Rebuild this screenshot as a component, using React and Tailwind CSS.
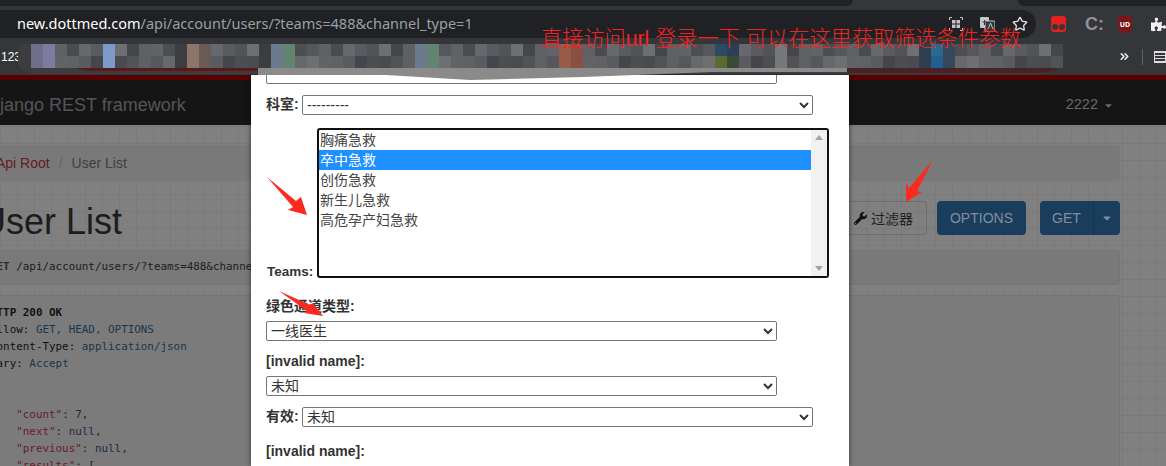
import { ChevronsRight, Star } from "lucide-react";
import { FaCaretDown, FaPuzzlePiece, FaWrench } from "react-icons/fa";

const TEAMS = ["胸痛急救", "卒中急救", "创伤急救", "新生儿急救", "高危孕产妇急救"];

const GRAYS = ["#4d4e52", "#56575c", "#606165", "#4a4b50", "#67686b", "#5a5b60", "#525357", "#6e6f72", "#45464b", "#5e6064", "#626366"];
const SPECIAL = {
  0: ["#6f6f8a", "#6f6f8a"],
  1: ["#7c7c9e", "#7c7c9e"],
  6: ["#7b9cc9", "#7b9cc9"],
  12: ["#3c3d41", "#3c3d41"],
  13: ["#8c766c", "#8c766c"],
  14: ["#695a56", "#695a56"],
  19: ["#3c3d41", "#3c3d41"],
  20: ["#6b7a8c", "#6b7a8c"],
  21: ["#62856f", "#62856f"],
  32: ["#6b7a8c", "#6b7a8c"],
  33: ["#62856f", "#62856f"],
  44: ["#9a5a48", "#9a5a48"],
  45: ["#884f42", "#884f42"],
  57: ["#2a4a66", "#5a6a30"],
  58: ["#2c3e55", "#3a4a38"],
  62: ["#76787a", "#76787a"],
  74: ["#2f3e4d", "#2f3e4d"],
  75: ["#2a6a8a", "#205f90"],
  76: ["#35475a", "#35475a"],
};

const CODE = [
  [["#111", "HTTP 200 OK", "font-bold"]],
  [["#111", "Allow: "], ["#17364d", "GET, HEAD, OPTIONS"]],
  [["#111", "Content-Type: "], ["#17364d", "application/json"]],
  [["#111", "Vary: "], ["#17364d", "Accept"]],
  [],
  [["#111", "{"]],
  [["#6a1a2a", '    "count"'], ["#222", ": "], ["#1a2a44", "7"], ["#222", ","]],
  [["#6a1a2a", '    "next"'], ["#222", ": "], ["#1a2a44", "null"], ["#222", ","]],
  [["#6a1a2a", '    "previous"'], ["#222", ": "], ["#1a2a44", "null"], ["#222", ","]],
  [["#6a1a2a", '    "results"'], ["#222", ": ["]],
];

function Mosaic() {
  const cols = Array.from({ length: 86 }, (_, i) => i);
  return (
    <svg className="absolute left-0 top-[38px]" width="1166" height="44" viewBox="0 38 1166 44">
      <path d="M24 44 Q18 44 18 52 L18 64 Q20 72 34 74 L1040 74 Q1060 72 1060 64 L1060 52 Q1060 44 1050 44 Z" fill="#3c3d41" />
      {cols.map((i) => {
        const c = SPECIAL[i] || [GRAYS[i % GRAYS.length], GRAYS[(i * 3 + 4) % GRAYS.length]];
        return (
          <g key={i}>
            <rect x={31 + i * 12} y="44" width="12" height="12" fill={c[0]} />
            <rect x={31 + i * 12} y="56" width="12" height="12" fill={c[1]} />
          </g>
        );
      })}
      <path d="M74 68 L258 68 L258 71 L90 71 Z" fill="#5a1a1a" />
      <path d="M847 68 L1058 68 Q1056 72 1040 73 L847 73 Z" fill="#4a2226" />
      <path d="M258 68 L847 68 L847 72 L713 72 L583 77 L470 80 L386 75 L258 75 Z" fill="#8a8a8a" />
    </svg>
  );
}

function BrowserChrome() {
  return (
    <div className="h-[75px] bg-[#35363a] font-['Noto_Sans',sans-serif]">
      <div className="flex h-[6px] bg-[#35363a]">
        <div className="w-[853px] rounded-br-lg bg-[#202124]" />
        <div className="flex-1" />
        <div className="w-[148px] rounded-bl-lg bg-[#202124]" />
      </div>
      <div className="flex h-[32px] items-center pt-[4px]">
        <div className="flex h-[28px] w-[1036px] items-center rounded-r-[14px] bg-[#202124] pl-[17px] text-[14.5px]">
          <span className="text-white">new.dottmed.com</span>
          <span className="text-[#9aa0a6]">/api/account/users/?teams=488&amp;channel_type=1</span>
          <div className="ml-auto mr-[8px] flex items-center gap-[17px]">
            <svg width="14" height="14" viewBox="0 0 14 14" fill="none" stroke="#c4c7c5">
              <path d="M.5 3V.5H3M11 .5h2.500V3M13.500 11v2.500H11M3 13.500H.5V11" />
              <rect x="3" y="3" width="3.500" height="3.500" fill="#c4c7c5" stroke="none" />
              <rect x="7.500" y="3" width="3.500" height="3.500" fill="#c4c7c5" stroke="none" />
              <rect x="3" y="7.500" width="3.500" height="3.500" fill="#c4c7c5" stroke="none" />
              <rect x="7.500" y="7.500" width="3.500" height="3.500" fill="#c4c7c5" stroke="none" />
            </svg>
            <svg width="15" height="15" viewBox="0 0 15 15">
              <rect x="0" y="0" width="9" height="11" rx="1" fill="#c4c7c5" />
              <rect x="5" y="4" width="10" height="11" rx="1" fill="#35363a" stroke="#c4c7c5" />
              <path d="M2.500 5h4M4.500 3v5" stroke="#35363a" />
              <path d="M8 12l2.500-6 2.500 6" stroke="#c4c7c5" fill="none" />
            </svg>
            <Star size={16} color="#e3e3e3" strokeWidth={2} />
          </div>
        </div>
        <div className="ml-[15px] flex items-center gap-[19px]">
          <div className="flex h-[16px] w-[15px] items-end justify-center gap-px rounded-[3px] bg-[#e3231b] pb-[2px]">
            <span className="h-[6px] w-[6px] rounded-full bg-[#35363a]" />
            <span className="h-[6px] w-[6px] rounded-full bg-[#35363a]" />
          </div>
          <span className="w-[14px] font-['Liberation_Sans',sans-serif] text-[18px] font-bold leading-none text-[#8f9194]">C:</span>
          <div className="flex h-[17px] w-[14px] items-center justify-center rounded-b-[6px] rounded-t-[2px] bg-[#7b1618] text-[7px] font-bold leading-none text-white">
            UD
          </div>
          <FaPuzzlePiece size={15} color="#f1f1f1" />
        </div>
      </div>
      <div className="relative flex h-[37px] items-center">
        <span className="pl-[1px] font-['Liberation_Sans',sans-serif] text-[12px] text-white">123</span>
        <div className="ml-auto flex items-center">
          <ChevronsRight size={13} color="#eee" strokeWidth={3} />
          <span className="ml-[11px] h-[16px] w-px bg-[#5f6063]" />
          <div className="ml-[11px] h-[12px] w-[12px] border border-[#ddd] bg-[linear-gradient(#ddd_1px,transparent_1px)] bg-[size:4px_3px]" />
        </div>
      </div>
    </div>
  );
}

function DimmedPage() {
  return (
    <div className="h-[391px] overflow-hidden bg-[#808080] bg-[linear-gradient(#7a7a7a_1px,transparent_1px),linear-gradient(90deg,#7a7a7a_1px,transparent_1px)] bg-[size:17px_17px] font-['Liberation_Sans',sans-serif]">
      <div className="h-[5px] bg-[#590000]" />
      <div className="flex h-[45px] items-center bg-[#151515] pt-[5px] text-[#555]">
        <span className="-ml-[13px] text-[18px]">Django REST framework</span>
        <span className="ml-auto mr-[52px] flex items-center gap-[5px] text-[14.5px] text-[#6a6a6a]">
          2222
          <FaCaretDown size={11} />
        </span>
      </div>
      <div className="-ml-[20px] w-[1140px] pt-[20px]">
        <div className="flex h-[36px] items-center rounded bg-[#797979] pl-[16px] text-[14px]">
          <span className="text-[#661a1a]">Api Root</span>
          <span className="px-[9px] text-[#666]">/</span>
          <span className="text-[#404040]">User List</span>
        </div>
        <div className="mt-[20px] flex h-[34px] items-center justify-between">
          <h1 className="pt-[8px] text-[36px] leading-none text-[#1c1c1c]">User List</h1>
          <div className="flex h-[34px] text-[14px]">
            <div className="flex w-[100px] items-center gap-[4px] rounded border border-[#6d6d6d] pl-[26px] text-[#1f1f1f]">
              <FaWrench size={13} color="#111" />
              <span className="font-['Noto_Sans_CJK_SC',sans-serif]">过滤器</span>
            </div>
            <div className="ml-[10px] flex w-[89px] items-center justify-center rounded bg-[#1b3d5c] text-[#7f8f9f]">OPTIONS</div>
            <div className="ml-[14px] flex w-[80px] items-center rounded bg-[#1b3d5c] text-[#7f8f9f]">
              <span className="flex h-full w-[54px] items-center justify-center border-r border-[#173550]">GET</span>
              <FaCaretDown size={12} className="ml-[7px]" />
            </div>
          </div>
        </div>
        <div className="mt-[15px] flex h-[35px] items-center rounded border border-[#747474] bg-[#797979] pl-[9px] font-['DejaVu_Sans_Mono',monospace] text-[10.9px]">
          <span className="font-bold text-[#2a2a2a]">GET</span>
          <span className="whitespace-pre text-[#1c1c1c]"> /api/account/users/?teams=488&amp;channel_type=1</span>
        </div>
        <div className="mt-[10px] h-[300px] rounded border border-[#747474] bg-[#7b7b7b] pl-[9px] pt-[8px] font-['DejaVu_Sans_Mono',monospace] text-[10.9px] leading-[17px]">
          {CODE.map((line, i) => (
            <div key={i} className="h-[17px] whitespace-pre">
              {line.map(([color, text, cls]) => (
                <span key={text} className={cls} style={{ color }}>
                  {text}
                </span>
              ))}
            </div>
          ))}
        </div>
      </div>
    </div>
  );
}

function Field({ value, className }) {
  return (
    <select
      defaultValue={value}
      className={`h-[20px] rounded-[2px] border border-[#767676] bg-white font-['Liberation_Sans','Noto_Sans_CJK_SC',sans-serif] text-[14px] leading-none font-normal text-[#333] ${className}`}
    >
      <option>{value}</option>
    </select>
  );
}

function Modal() {
  return (
    <div className="absolute bottom-0 left-[251px] top-[75px] w-[598px] overflow-hidden bg-white pl-[15px] font-['Liberation_Sans','Noto_Sans_CJK_SC',sans-serif] text-[14px] font-bold text-[#333] shadow-[0_0_5px_rgba(0,0,0,0.6)]">
      <div className="-mt-[11px] h-[20px] w-[511px] rounded-[2px] border border-[#767676]" />
      <div className="mt-[10px] flex items-center">
        <span className="w-[36px]">科室:</span>
        <Field value="---------" className="w-[511px]" />
      </div>
      <div className="mt-[13px] flex items-end">
        <span className="mb-[-4px] w-[51px] pl-[1px] text-[13.5px]">Teams:</span>
        <div className="flex h-[150px] w-[512px] rounded-[3px] border-2 border-[#101010] bg-white text-[14px] leading-[20px] font-normal text-[#444]">
          <div className="flex-1">
            {TEAMS.map((t, i) => (
              <div key={t} className={i === 1 ? "h-[20px] bg-[#1e90ff] pl-[1px] text-white" : "h-[20px] pl-[1px]"}>
                {t}
              </div>
            ))}
          </div>
          <div className="flex w-[16px] flex-col items-center justify-between bg-[#f1f1f1] py-[5px]">
            <span className="h-0 w-0 border-x-[4px] border-b-[5px] border-x-transparent border-b-[#a3a3a3]" />
            <span className="h-0 w-0 border-x-[4px] border-t-[5px] border-x-transparent border-t-[#a3a3a3]" />
          </div>
        </div>
      </div>
      <div className="mt-[18px] leading-[20px]">绿色通道类型:</div>
      <Field value="一线医生" className="mt-[5px] block w-[511px]" />
      <div className="mt-[10px] leading-[20px]">[invalid name]:</div>
      <Field value="未知" className="mt-[5px] block w-[511px]" />
      <div className="mt-[10px] flex items-center">
        <span className="w-[36px]">有效:</span>
        <Field value="未知" className="w-[511px]" />
      </div>
      <div className="mt-[14px] leading-[20px]">[invalid name]:</div>
    </div>
  );
}

function Annotations() {
  return (
    <>
      <span className="absolute left-[541px] top-[24px] whitespace-pre font-['Liberation_Sans','Noto_Sans_CJK_SC',sans-serif] text-[21.2px] font-light leading-[30px] text-[#f5231f]">
        直接访问url 登录一下 可以在这里获取筛选条件参数
      </span>
      <svg className="pointer-events-none absolute left-0 top-0" width="1166" height="466" fill="#fb2a1e">
        <polygon points="267,177 296,201 301,197 307,215 288,210 293,207" />
        <polygon points="933,160 917,191 922,192 906,202 906,183 909,188" />
        <polygon points="279,291 310,305 313,303 323,316 304,313 307,311" />
      </svg>
    </>
  );
}

export default function App() {
  return (
    <div className="relative h-[466px] w-[1166px] overflow-hidden">
      <BrowserChrome />
      <DimmedPage />
      <Modal />
      <Mosaic />
      <Annotations />
    </div>
  );
}
